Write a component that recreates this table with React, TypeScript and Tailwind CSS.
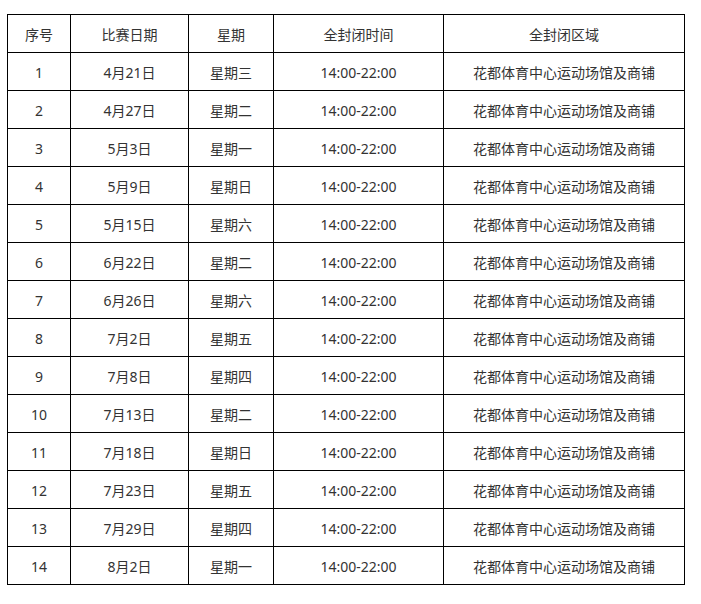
import React from "react";

const rows: [string, string, string][] = [
  ["1", "4月21日", "星期三"],
  ["2", "4月27日", "星期二"],
  ["3", "5月3日", "星期一"],
  ["4", "5月9日", "星期日"],
  ["5", "5月15日", "星期六"],
  ["6", "6月22日", "星期二"],
  ["7", "6月26日", "星期六"],
  ["8", "7月2日", "星期五"],
  ["9", "7月8日", "星期四"],
  ["10", "7月13日", "星期二"],
  ["11", "7月18日", "星期日"],
  ["12", "7月23日", "星期五"],
  ["13", "7月29日", "星期四"],
  ["14", "8月2日", "星期一"],
];

const cell = "border border-black h-[38px] p-0 pt-[2px] text-center align-middle font-normal";

export default function App() {
  return (
    <div className="bg-white w-[701px] h-[604px] pt-[14px] pl-[7px]" style={{ fontFamily: '"Noto Sans", "Noto Sans CJK SC", sans-serif' }}>
      <table className="border-collapse table-fixed w-[677px] text-[14px] leading-[20px] text-[#333333]">
        <colgroup>
          <col className="w-[63px]" />
          <col className="w-[118px]" />
          <col className="w-[85px]" />
          <col className="w-[170px]" />
          <col className="w-[241px]" />
        </colgroup>
        <thead>
          <tr>
            <th className={cell}>序号</th>
            <th className={cell}>比赛日期</th>
            <th className={cell}>星期</th>
            <th className={cell}>全封闭时间</th>
            <th className={cell}>全封闭区域</th>
          </tr>
        </thead>
        <tbody>
          {rows.map((r) => (
            <tr key={r[0]}>
              <td className={cell}>{r[0]}</td>
              <td className={cell}>{r[1]}</td>
              <td className={cell}>{r[2]}</td>
              <td className={cell}>14:00-22:00</td>
              <td className={cell}>花都体育中心运动场馆及商铺</td>
            </tr>
          ))}
        </tbody>
      </table>
    </div>
  );
}
